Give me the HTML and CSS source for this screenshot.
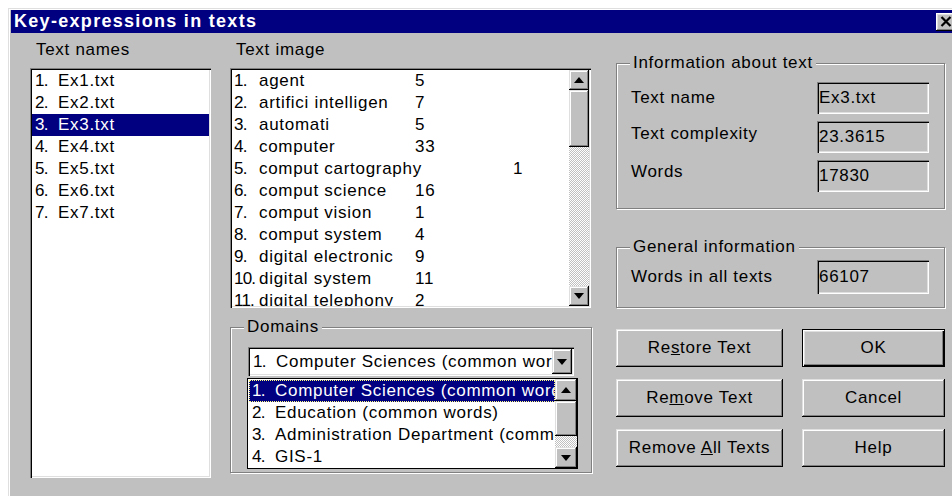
FILE: index.html
```html
<!DOCTYPE html>
<html lang="en">
<head>
<meta charset="utf-8">
<title>Key-expressions in texts</title>
<link rel="stylesheet" href="styles.css">
</head>
<body>
<div class="window">
  <div class="titlebar">
    <span class="title">Key-expressions in texts</span>
    <span class="close">
      <svg width="12" height="11" viewBox="0 0 12 11"><path d="M1.5 1 L10.5 10 M10.5 1 L1.5 10" stroke="#000" stroke-width="2.2" fill="none"/></svg>
    </span>
  </div>

  <div class="client">
    <!-- list of loaded texts -->
    <div class="col col-names">
      <div class="caption">Text names</div>
      <ul class="listbox names">
        <li><span class="num">1.</span>Ex1.txt</li>
        <li><span class="num">2.</span>Ex2.txt</li>
        <li class="selected"><span class="num">3.</span>Ex3.txt</li>
        <li><span class="num">4.</span>Ex4.txt</li>
        <li><span class="num">5.</span>Ex5.txt</li>
        <li><span class="num">6.</span>Ex6.txt</li>
        <li><span class="num">7.</span>Ex7.txt</li>
      </ul>
    </div>

    <!-- key terms of the selected text and the domain picker -->
    <div class="col col-image">
      <div class="caption">Text image</div>
      <div class="listbox image">
        <ul class="rows">
          <li><span class="num">1.</span><span class="term">agent</span><span>5</span></li>
          <li><span class="num">2.</span><span class="term">artifici intelligen</span><span>7</span></li>
          <li><span class="num">3.</span><span class="term">automati</span><span>5</span></li>
          <li><span class="num">4.</span><span class="term">computer</span><span>33</span></li>
          <li class="wide"><span class="num">5.</span><span class="term">comput cartography</span><span>1</span></li>
          <li><span class="num">6.</span><span class="term">comput science</span><span>16</span></li>
          <li><span class="num">7.</span><span class="term">comput vision</span><span>1</span></li>
          <li><span class="num">8.</span><span class="term">comput system</span><span>4</span></li>
          <li><span class="num">9.</span><span class="term">digital electronic</span><span>9</span></li>
          <li><span class="num">10.</span><span class="term">digital system</span><span>11</span></li>
          <li><span class="num">11.</span><span class="term">digital telephony</span><span>2</span></li>
        </ul>
        <div class="vscroll">
          <span class="sb-btn"><svg width="10" height="6" viewBox="0 0 10 6"><path d="M5 0 L10 6 L0 6 Z" fill="#000"/></svg></span>
          <span class="sb-thumb tall"></span>
          <span class="sb-track"></span>
          <span class="sb-btn"><svg width="10" height="6" viewBox="0 0 10 6"><path d="M0 0 L10 0 L5 6 Z" fill="#000"/></svg></span>
        </div>
      </div>

      <div class="group domains">
        <span class="group-label">Domains</span>
        <div class="combo">
          <div class="combo-text"><span class="num">1.</span>Computer Sciences (common words)</div>
          <span class="combo-btn"><svg width="10" height="6" viewBox="0 0 10 6"><path d="M0 0 L10 0 L5 6 Z" fill="#000"/></svg></span>
        </div>
        <div class="dropdown">
          <ul class="drop-rows">
            <li class="selected focus"><span class="num">1.</span>Computer Sciences (common words)</li>
            <li><span class="num">2.</span>Education (common words)</li>
            <li><span class="num">3.</span>Administration Department (common words)</li>
            <li><span class="num">4.</span>GIS-1</li>
          </ul>
          <div class="vscroll small">
            <span class="sb-btn up"><svg width="10" height="6" viewBox="0 0 10 6"><path d="M5 0 L10 6 L0 6 Z" fill="#000"/></svg></span>
            <span class="sb-thumb short"></span>
            <span class="sb-track"></span>
            <span class="sb-btn down"><svg width="10" height="6" viewBox="0 0 10 6"><path d="M0 0 L10 0 L5 6 Z" fill="#000"/></svg></span>
          </div>
        </div>
      </div>
    </div>

    <!-- statistics and commands -->
    <div class="col col-info">
      <div class="group info">
        <span class="group-label">Information about text</span>
        <div class="info-rows">
          <div class="info-row"><span class="info-label">Text name</span><span class="field">Ex3.txt</span></div>
          <div class="info-row"><span class="info-label lift">Text complexity</span><span class="field">23.3615</span></div>
          <div class="info-row"><span class="info-label lift-more">Words</span><span class="field">17830</span></div>
        </div>
      </div>

      <div class="group general">
        <span class="group-label">General information</span>
        <div class="info-row"><span class="info-label">Words in all texts</span><span class="field big">66107</span></div>
      </div>

      <div class="buttons">
        <button class="btn">Re<u>s</u>tore Text</button>
        <button class="btn default">OK</button>
        <button class="btn">Re<u>m</u>ove Text</button>
        <button class="btn">Cancel</button>
        <button class="btn">Remove <u>A</u>ll Texts</button>
        <button class="btn">Help</button>
      </div>
    </div>
  </div>
</div>
</body>
</html>
```

FILE: styles.css
```css
* { box-sizing: border-box; }

html, body { margin: 0; padding: 0; }

body {
  width: 952px;
  height: 496px;
  overflow: hidden;
  background: #fff;
  font-family: "Liberation Sans", Arial, sans-serif;
  font-size: 17px;
  letter-spacing: 0.7px;
  color: #000;
}

ul { list-style: none; margin: 0; padding: 0; }

/* dialog frame */
.window {
  margin: 8px 0 0 8px;
  width: 950px;
  height: 488px;
  border-top: 1px solid #dfdfdf;
  border-left: 1px solid #dfdfdf;
  box-shadow: inset 1px 1px #fff;
  padding: 1px 0 0 2px;
  background: #c0c0c0;
}

.titlebar {
  height: 23px;
  background: #000080;
  color: #fff;
  display: flex;
  align-items: center;
  justify-content: space-between;
  padding-left: 3px;
}

.title {
  font-weight: bold;
  font-size: 18px;
  letter-spacing: 1.3px;
}

.close {
  width: 20px;
  height: 18px;
  margin-right: 2px;
  background: #c0c0c0;
  display: flex;
  align-items: center;
  justify-content: center;
  box-shadow: inset -1px -1px #000, inset 1px 1px #fff, inset -2px -2px #808080, inset 2px 2px #dfdfdf;
}

/* three columns of controls */
.client {
  display: flex;
  padding: 7px 0 0 19px;
}

.col-names { width: 181px; margin-right: 19px; }
.col-image { width: 363px; margin-right: 23px; }
.col-info  { width: 329px; }

.caption {
  height: 20px;
  line-height: 20px;
  padding-left: 6px;
}

.listbox {
  background: #fff;
  padding: 2px;
  box-shadow: inset 1px 1px #808080, inset 2px 2px #000, inset -1px -1px #fff, inset -2px -2px #dfdfdf;
}

.num { width: 23px; flex: none; letter-spacing: -0.8px; }

.selected { background: #000080; color: #fff; }

.names {
  margin-top: 8px;
  height: 410px;
}

.names li {
  display: flex;
  height: 22px;
  line-height: 22px;
  padding-left: 3px;
}

/* text image list with its scrollbar */
.image {
  margin-top: 8px;
  width: 361px;
  height: 240px;
  display: flex;
}

.rows {
  flex: 1;
  overflow: hidden;
}

.rows li {
  display: flex;
  height: 22px;
  line-height: 22px;
  padding-left: 2px;
  white-space: nowrap;
}

.rows .num { width: 25px; }
.term { width: 156px; flex: none; }
.wide .term { width: 254px; }

.vscroll {
  width: 20px;
  flex: none;
  display: flex;
  flex-direction: column;
  background: repeating-conic-gradient(#fff 0 25%, #c0c0c0 0 50%) 0 0 / 2px 2px;
}

.sb-btn, .sb-thumb, .combo-btn, .btn {
  background: #c0c0c0;
  box-shadow: inset -1px -1px #000, inset 1px 1px #dfdfdf, inset -2px -2px #808080, inset 2px 2px #fff;
}

.sb-btn {
  height: 20px;
  flex: none;
  display: flex;
  align-items: center;
  justify-content: center;
}

.sb-thumb { flex: none; }
.sb-thumb.tall { height: 57px; }
.sb-track { flex: 1; }

/* etched group boxes */
.group {
  position: relative;
  border: 1px solid #808080;
  box-shadow: inset 1px 1px #fff, 1px 1px #fff;
}

.group-label {
  position: absolute;
  top: -11px;
  left: 13px;
  padding: 0 3px;
  line-height: 20px;
  background: #c0c0c0;
  white-space: nowrap;
}

.domains {
  margin-top: 19px;
  width: 362px;
  height: 146px;
  padding: 19px 0 0 17px;
}

.combo {
  width: 326px;
  height: 29px;
  padding: 2px;
  display: flex;
  background: #fff;
  box-shadow: inset 1px 1px #808080, inset 2px 2px #000, inset -1px -1px #fff, inset -2px -2px #dfdfdf;
}

.combo-text {
  flex: 1;
  display: flex;
  overflow: hidden;
  white-space: nowrap;
  line-height: 25px;
  padding-left: 3px;
}

.combo-btn {
  width: 20px;
  flex: none;
  display: flex;
  align-items: center;
  justify-content: center;
}

.dropdown {
  margin: 2px 0 0 -1px;
  width: 331px;
  height: 91px;
  border: 1px solid #000;
  background: #fff;
  display: flex;
}

.drop-rows {
  flex: 1;
  overflow: hidden;
  padding: 1px 0 0 1px;
}

.drop-rows li {
  display: flex;
  height: 22px;
  line-height: 22px;
  padding-left: 3px;
  white-space: nowrap;
}

.focus {
  outline: 1px dotted #ffff80;
  outline-offset: -1px;
}

.vscroll.small { width: 22px; }
.small .sb-btn.up { height: 22px; }
.small .sb-btn.down { height: 21px; }
.sb-thumb.short { height: 35px; }

/* information panels */
.info {
  margin-top: 23px;
  height: 146px;
  padding: 18px 15px 0 14px;
}

.info-rows {
  display: flex;
  flex-direction: column;
  gap: 7px;
}

.info-row {
  display: flex;
  align-items: center;
}

.info-label { width: 186px; flex: none; }
.info-label.lift { padding-bottom: 6px; }
.info-label.lift-more { padding-bottom: 8px; }

.field {
  width: 112px;
  height: 32px;
  line-height: 32px;
  padding-left: 2px;
  background: #c0c0c0;
  box-shadow: inset 1px 1px #808080, inset 2px 2px #000, inset -1px -1px #fff, inset -2px -2px #dfdfdf;
}

.field.big { height: 34px; line-height: 34px; }

.general {
  margin-top: 38px;
  height: 61px;
  padding: 12px 15px 0 14px;
}

/* command buttons */
.buttons {
  margin-top: 21px;
  display: grid;
  grid-template-columns: 167px 143px;
  grid-auto-rows: 38px;
  column-gap: 19px;
  row-gap: 12px;
}

.btn {
  border: none;
  padding: 0;
  margin: 0;
  font: inherit;
  letter-spacing: inherit;
  color: #000;
}

.btn.default {
  box-shadow: inset 0 0 0 1px #000, inset 2px 2px #fff, inset -2px -2px #000, inset -3px -3px #808080, inset 3px 3px #dfdfdf;
}
```
